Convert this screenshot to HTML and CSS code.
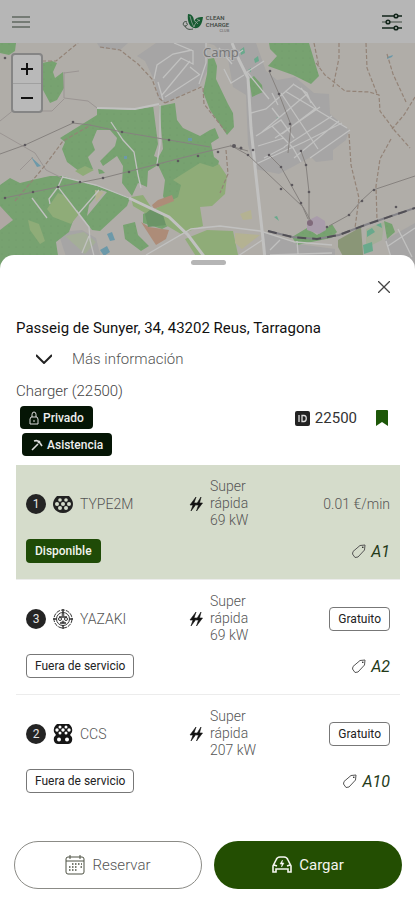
FILE: index.html
```html
<!DOCTYPE html>
<html lang="es">
<head>
<meta charset="utf-8">
<meta name="viewport" content="width=device-width, initial-scale=1">
<title>Clean Charge</title>
<link rel="stylesheet" href="styles.css">
</head>
<body>
<svg class="defs" width="0" height="0" aria-hidden="true">
  <symbol id="bolt" viewBox="0 0 14 14"><path d="M7 0 1 8h3l-2 6 6-8H5zM12 0 7 8h2.500l-2 6 6-8h-3z" stroke="#111" stroke-width=".6"/></symbol>
  <symbol id="tag" viewBox="0 0 16 16"><path d="M2 8.500 9 2.500l5-.5-.5 5L7 14l-3 .5L1.500 11z" fill="none" stroke="currentColor" stroke-linejoin="round"/><circle cx="11.800" cy="4.200" r=".8"/></symbol>
</svg>

<header class="topbar">
  <button class="icon-button" aria-label="Menú">
    <svg width="18" height="12" viewBox="0 0 18 12" stroke="#606860" stroke-width="1.600"><path d="M0 1h18M0 6h18M0 11h18"/></svg>
  </button>
  <div class="brand">
    <svg width="22" height="18" viewBox="0 0 22 18">
      <path d="M6 1c4 0 6 3 6 8 1-4 4-5 9-5-1 8-4 12-9 11C7 14 5 7 6 1z" fill="#175b32"/>
      <path d="M8 3c1 4 2 8 4 11M12 14c1-4 3-6 6-7M13 8l3 3M15 6l3 2" stroke="#a6afa7" stroke-width=".7" fill="none"/>
      <path d="M5 9C1 7 0 13 3 13s3-3 1-3m-1 3c1 3 4 4 8 3" stroke="#3c4b40" stroke-width="1" fill="none"/>
    </svg>
    <div class="brand-name"><span>CLEAN</span><span>CHARGE</span><small>CLUB</small></div>
  </div>
  <button class="icon-button" aria-label="Filtros">
    <svg width="22" height="18" viewBox="0 0 22 18" stroke="#12251a" stroke-width="1.600" fill="#b6b6b6"><path d="M1 3h20M1 15h20"/><path d="M1 9h20" stroke="#6b736d"/><circle cx="15" cy="3" r="1.800"/><circle cx="7" cy="9" r="1.800"/><circle cx="15" cy="15" r="1.800"/></svg>
  </button>
</header>

<main>
<section class="map" aria-label="Mapa">
  <svg class="map-art" viewBox="0 43 415 226" preserveAspectRatio="xMidYMin slice">
    <defs><pattern id="trees" width="7" height="7" patternUnits="userSpaceOnUse"><rect width="7" height="7" fill="#77a270"/><circle cx="2" cy="2" r=".4" fill="#658f60"/></pattern></defs>
    <rect y="43" width="415" height="226" fill="#b0ada8"/>
    <g fill="#a6a5a5">
      <path d="M156 43h50l2 26-9 18-34 16-6-3-4-18-10-21-8-5zM97 43h31l-8 7-20-2z"/>
      <path d="M207 43h49l10 28 11 9 18-3 19 16 15 1 1 20 19 16-3 10-13 10v10l-17 2-5-5-32 17-24-5-7-24-2-50-13-8-5-28-14-14z"/>
      <path d="M262 232l36 12 37 5v20h-70zM385 240l30-17v46h-20zM82 206l12-17 8 3-16 25zM58 232l24-2 14 8 8 31H70z"/>
    </g>
    <g fill="url(#trees)">
      <path d="M0 43h16l-1 8-6 4-9-2zM42 63l10-2 5 2-4 9 2 6 8-6 1 16-7 12-7 3-7-13z"/>
      <path d="M97 108l33 2 30-4 15-3 2 17 6 8 17 8 10-6 5-2 4 10-8 5 3 14 5 4-4 18-7-9-10 6-18 27-14 0-3-7 2-16-7-15-10 6-1 16-9-4-6 13-10-13 1-17-6-10-14 10-3-5 15-15 2-8-7-8h-13l-5 12 3 8-7 7 5 12-10 5-16-12-5-13 3-7-5-4 37-23z"/>
      <path d="M0 185l10-7 10 5 12-3 18-4h13l34 10 33 12-3 8-27 25-8-1-15-20-8 22-13 10 4 27H0zM123 225l12-3 3 13 11 11-8 5-16-12zM98 169l4 1 3 3-6 1z"/>
      <path d="M208 59l6-1 3 8-1 13 12 25 5 9 1 14-7 8-17-25-7-18 4-18zM269 43h40l10 33-8 8-18-9-25-9 9-10-7-7zM254 76l8 9 1 7-11 5-3-18zM384 221l8 3 3 8-8 7zM292 237l15-9 10 7 15-11 5 8-6 6-34 7z"/>
      <path d="M143 214l8-4 21 14-10 5-19-6z"/>
    </g>
    <g fill="#8fac78">
      <path d="M200 163l13 4 6-3 8 12-2 18-13 12-12 1 3 19-22 8-48-28-2-9 12-2 10 15 25-13 3-12-8-5z"/>
      <path d="M58 193l8 3 13 18-8 10-18-7-6-8zM185 239l22-9 26 1 8 38h-37zM28 220l11 4 6 17-5 3-10-14zM75 171l10-5 9 4-11 6z"/>
    </g>
    <path d="M338 240l23-13 3 39-14 3-12-22z" fill="#8a9677"/>
    <path d="M0 206l13 14-13 10z" fill="#afa7a3"/>
    <g fill="#b0ada8"><path d="M153 105h6l4 44-5 9-4-2 4-12zM89 205l12-15 6 2-20 24z"/></g>
    <g fill="#ad8c78"><path d="M152 205l6-5 14-5 2 6-20 8zM141 222l8 5 20 3-3 9-10 6-4-6z"/></g>
    <path d="M145 214l6-5 12 6 3 10-18 2z" fill="#6b9467"/>
    <path d="M235 233l25 2-18 14-7-6zM240 214l11-4 1 9-9 1zM95 190l9 2-8 10z" fill="#b4b292"/>
    <path d="M307 221l10-5 8 5 1 9-7 4-12-4z" fill="#a99cab"/>
    <path d="M366 229l18-7-2 18-16 8zM65 236l19-4 12 10-11 12z" fill="#a4ae98"/>
    <g fill="#69a98c"><path d="M367 231l5-3 3 4-8 5zM363 245l9-3 1 9-9 3zM240 50l4-3 1 6-4 2zM254 59l4-3 1 5-4 2zM376 225l5-2 1 5zM274 217l3-1 2 5zM248 70l3-2v4zM276 118l4-1-2 2z"/></g>
    <g fill="#6c99a9"><path d="M31 157l10 9-4 1zM107 234l5-2 3 8-5 1zM100 250l7-4 3 6-6 4zM188 138h4v3h-4zM124 156h3v3h-3zM387 57l6-2-1 2-5 2z"/></g>
    <g fill="none" stroke="#c1c1c0" stroke-width="1.300">
      <path d="M206 43v20l-7 21M165 97l34-22M154 79l3-14 16-11 19-4M162 95l28-34M174 43l19 8v13l-12-6-18 20M190 67l10 8M163 100l-5-18"/>
      <path d="M251 113l15-4 28-25M272 108l7 9M278 105l-6-12M285 91l62 37M293 84l14 9 4 10M281 93l37 56M301 88l15 20-34 26M307 94l-45 38M320 107l-45 31M332 116l-48 31M339 121l-45 37M350 130l-40 28M254 165l50-23 38-19M256 136l16-10 21 22 8 14M272 126l9-6 13 18M258 146l26-8M264 158l21-11"/>
      <path d="M244 75l-13 8-7-14M247 72l22 27M244 74l20-13M219 48l13 16M230 59l13-9"/>
      <path d="M63 176l-5 11 20 26 11 14 1 13 7 28M89 236l-7 17M58 187l-9 12 1 5M99 190l-20 23M63 177l33 8 33 13M111 122l12 18 11 12 4 23 3 13M32 198l15 20M160 105v39l-3 20M146 255l45-26 29-3 40 5 35 11 37 3M238 256l26-17M270 250l10-10M297 241l2 25M270 255l62-2M386 241l8 26M398 229l14 28M388 246l27-18"/>
      <path d="M129 198l40 19 19 18 18 24M232 43l7 17 9 18 3 50 5 48 7 63 3 30" stroke-width="3"/>
      <path d="M97 108l38 1 24-5" stroke-width="2"/>
    </g>
    <g fill="none" stroke="#9b9593"><path d="M64 72v26l24 3 9 7M42 111h10l12-12M64 73l15-2M0 121l20-16M0 133l35 20 11 17 16 8M20 170l13-13"/></g>
    <g fill="none" stroke="#938377" stroke-width="1.200" stroke-dasharray="4 2">
      <path d="M100 47l20 3 18 14 14 15 7 19 6 5M42 61h14l22-18M165 103l34-15 4-2M203 88l1 16 22 28M316 63l9 12 20 16 24 1 10 3 1 16 15 20 15 17M339 43v15l-6 29M366 43l1 25 9 23 1 4M387 54l6 20 13 28M415 97l-11 18-12 14M15 201l28-33 20-27 28-16M349 134l2 31 8 33-4 30M391 139l-11 20-4 27 1 34M226 150l2 24-8 19M314 43l5 24" />
    </g>
    <g fill="none" stroke="#86827f"><path d="M0 154l25-9 48-22 17 2 32 7 47 8 41 7M4 198l54-11 45-9 55-14 47-12 25-6 18 5M230 145l18 10 55 52 8 14M269 155l12 12 20 36 7 16M301 151l5 14 3 27v28M415 176l-42 14-12 11-12 14-20 11M269 71l10 23 12 31-3 28"/></g>
    <g fill="#5c585d"><circle cx="5" cy="58" r="1.300"/><circle cx="25" cy="145" r="1.300"/><circle cx="73" cy="122" r="1.300"/><circle cx="122" cy="132" r="1.300"/><circle cx="169" cy="140" r="1.300"/><circle cx="198" cy="156" r="1.300"/><circle cx="218" cy="152" r="1.300"/><circle cx="234" cy="146" r="2"/><circle cx="241" cy="148" r="1.500"/><circle cx="248" cy="155" r="1.300"/><circle cx="253" cy="150" r="1.300"/><circle cx="5" cy="198" r="1.300"/><circle cx="33" cy="192" r="1.300"/><circle cx="58" cy="187" r="1.300"/><circle cx="80" cy="182" r="1.300"/><circle cx="103" cy="178" r="1.300"/><circle cx="129" cy="172" r="1.300"/><circle cx="158" cy="165" r="1.300"/><circle cx="178" cy="161" r="1.300"/><circle cx="269" cy="155" r="1.300"/><circle cx="281" cy="167" r="1.300"/><circle cx="292" cy="185" r="1.300"/><circle cx="281" cy="189" r="1.300"/><circle cx="301" cy="203" r="1.300"/><circle cx="309" cy="192" r="1.300"/><circle cx="306" cy="165" r="1.300"/><circle cx="301" cy="151" r="1.300"/><circle cx="290" cy="124" r="1.300"/><circle cx="279" cy="94" r="1.300"/><circle cx="270" cy="71" r="1.300"/><circle cx="374" cy="190" r="1.300"/><circle cx="362" cy="201" r="1.300"/><circle cx="349" cy="215" r="1.300"/><circle cx="327" cy="227" r="1.300"/><circle cx="396" cy="207" r="1.300"/></g>
    <circle cx="310" cy="223" r="3" fill="#806a7b"/>
    <path d="M268 231l24 6 25 2 22-4 26-10 50-17" fill="none" stroke="#858489" stroke-width="2"/>
    <path d="M268 231l24 6 25 2 22-4 26-10 50-17" fill="none" stroke="#514f55" stroke-width="2" stroke-dasharray="9 6"/>
    <text class="map-label" x="203" y="57">Camp</text>
  </svg>
  <div class="zoom-control">
    <button aria-label="Acercar"><svg width="12" height="12" viewBox="0 0 12 12"><path d="M6 0v12M0 6h12"/></svg></button>
    <button aria-label="Alejar"><svg width="12" height="12" viewBox="0 0 12 12"><path d="M0 6h12"/></svg></button>
  </div>
</section>

<section class="sheet">
  <div class="handle"></div>
  <button class="close" aria-label="Cerrar"><svg width="12" height="12" viewBox="0 0 12 12" stroke="#444" stroke-width="1.300"><path d="M0 0l12 12M12 0 0 12"/></svg></button>
  <h1>Passeig de Sunyer, 34, 43202 Reus, Tarragona</h1>
  <button class="more"><svg width="16" height="10" viewBox="0 0 16 10" fill="none" stroke="#222" stroke-width="2"><path d="M0 1l8 8 8-8"/></svg>Más información</button>
  <h2>Charger (22500)</h2>
  <div class="meta">
    <div class="badges">
      <span class="badge dark"><svg width="10" height="14" viewBox="0 0 10 14" fill="none" stroke="#ddd"><path d="M2 6h6l1 2v5H1V8zM3 6V3.500a2 2.500 0 0 1 4 0V6M5 9v2"/></svg>Privado</span>
      <span class="badge dark assist"><svg width="12" height="12" viewBox="0 0 12 12" fill="none" stroke="#ddd" stroke-width="1.600"><path d="M1 11l6-6M3 2c3-1 5 0 6 2l2 3M7 4l2-2"/></svg>Asistencia</span>
    </div>
    <div class="charger-id">
      <svg width="15" height="15" viewBox="0 0 15 15"><rect width="15" height="15" rx="2" fill="#222"/><path d="M4 4v7M7 4.500v6h2c3 0 3-6 0-6z" fill="none" stroke="#ddd" stroke-width="1.300"/></svg>
      <span>22500</span>
      <button class="bookmark" aria-label="Guardar"><svg width="12" height="16" viewBox="0 0 12 16"><path d="M0 1q0-1 1-1h10q1 0 1 1v15l-6-4-6 4z" fill="#1d5708"/></svg></button>
    </div>
  </div>

  <ul class="connectors">
    <li class="connector selected">
      <div class="specs">
        <div class="plug"><span class="number">1</span>
          <svg width="20" height="20" viewBox="0 0 20 20"><path d="M4 2h12q4 4 4 8c0 5-4 9-10 9S0 15 0 10q0-4 4-8z" fill="#222"/><g fill="#d5dccb"><circle cx="7" cy="6" r="1.800"/><circle cx="13" cy="6" r="1.800"/><circle cx="4" cy="10" r="2"/><circle cx="10" cy="10" r="2"/><circle cx="16" cy="10" r="2"/><circle cx="7" cy="14" r="2"/><circle cx="13" cy="14" r="2"/></g></svg>
          <span>TYPE2M</span></div>
        <div class="power"><svg width="14" height="14"><use href="#bolt"/></svg><span>Super<br>rápida<br>69 kW</span></div>
        <div class="price">0.01 €/min</div>
      </div>
      <div class="status"><span class="badge available">Disponible</span><span class="spot"><svg width="16" height="16"><use href="#tag"/></svg>A1</span></div>
    </li>
    <li class="connector">
      <div class="specs">
        <div class="plug"><span class="number">3</span>
          <svg width="20" height="20" viewBox="0 0 20 20" fill="none" stroke="#333"><circle cx="10" cy="10" r="9" stroke-dasharray="4 1"/><circle cx="10" cy="10" r="6.500"/><path d="M6 8h8M7 14h6M10 0v5M10 16v4M0 10h3M17 10h3" stroke-width="1.500"/><circle cx="7" cy="10" r="1.500"/><circle cx="13" cy="10" r="1.500"/><circle cx="10" cy="6" r="1"/><circle cx="10" cy="13" r="1"/></svg>
          <span>YAZAKI</span></div>
        <div class="power"><svg width="14" height="14"><use href="#bolt"/></svg><span>Super<br>rápida<br>69 kW</span></div>
        <div class="price"><span class="badge outline">Gratuito</span></div>
      </div>
      <div class="status"><span class="badge outline">Fuera de servicio</span><span class="spot"><svg width="16" height="16"><use href="#tag"/></svg>A2</span></div>
    </li>
    <li class="connector">
      <div class="specs">
        <div class="plug"><span class="number">2</span>
          <svg width="20" height="20" viewBox="0 0 20 20"><path d="M4 0h12q4 3 3 8l-2 3q3 2 2 6-1 3-4 3H5q-3 0-4-3-1-4 2-6L1 8Q0 3 4 0z" fill="#161616"/><g fill="#fff"><circle cx="7" cy="3" r="1.500"/><circle cx="13" cy="3" r="1.500"/><circle cx="4" cy="6" r="1.700"/><circle cx="10" cy="6" r="1.700"/><circle cx="16" cy="6" r="1.700"/><circle cx="7" cy="9" r="1.500"/><circle cx="13" cy="9" r="1.500"/><circle cx="6" cy="15.500" r="2"/><circle cx="14" cy="15.500" r="2"/></g></svg>
          <span>CCS</span></div>
        <div class="power"><svg width="14" height="14"><use href="#bolt"/></svg><span>Super<br>rápida<br>207 kW</span></div>
        <div class="price"><span class="badge outline">Gratuito</span></div>
      </div>
      <div class="status"><span class="badge outline">Fuera de servicio</span><span class="spot"><svg width="16" height="16"><use href="#tag"/></svg>A10</span></div>
    </li>
  </ul>

  <div class="actions">
    <button class="reserve"><svg width="20" height="20" viewBox="0 0 20 20" fill="none" stroke="#4c5142"><rect x="1" y="2" width="18" height="17" rx="2"/><path d="M1 6h18M5 0v4M15 0v4"/><path d="M4 12h9M4 15h9M7 9h10M17 12h-2" stroke-width="1.600" stroke-dasharray="1.500 1.500"/></svg>Reservar</button>
    <button class="charge"><svg width="20" height="18" viewBox="0 0 20 18" fill="none" stroke="#f4f5ef" stroke-width="1.600"><path d="M1 16V10l3-6q1-3 4-3h4q3 0 4 3l3 6v6h-3v-3H4v3zM2 9l3 1M18 9l-3 1"/><path d="M10.500 4 8 8h2l-.5 3L12 7h-2z" fill="#fff" stroke-width=".5"/></svg>Cargar</button>
  </div>
</section>
</main>
</body>
</html>
```
FILE: styles.css
```css
* { box-sizing: border-box; }
body { margin: 0; background: #fff; color: #222; font-family: Roboto, "Liberation Sans", sans-serif; font-size: 14px; font-weight: 300; }
button { border: 0; padding: 0; background: none; font: inherit; color: inherit; }
svg { display: block; flex-shrink: 0; }
.defs { position: absolute; }
h1, h2, ul { margin: 0; padding: 0; }

.topbar { display: grid; grid-template-columns: 1fr auto 1fr; align-items: center; height: 43px; padding: 0 12px; background: #b6b6b6; }
.icon-button:last-child { justify-self: end; }
.brand { display: flex; align-items: center; gap: 2px; margin-right: 4px; }
.brand-name { display: flex; flex-direction: column; padding-top: 4px; font-size: 6px; line-height: 7px; font-weight: 500; color: #39443c; }
.brand-name small { align-self: flex-end; font-size: 4px; line-height: 5px; color: #777; }

.map { position: relative; height: 226px; overflow: hidden; background: #b0ada8; }
.map-art { width: 100%; height: 100%; }
.map-label { font: 400 13px "Noto Sans", sans-serif; fill: #777; stroke: #b4b4b4; stroke-width: 2px; paint-order: stroke; }
.zoom-control { position: absolute; left: 11px; top: 10px; width: 32px; border: 2px solid #858585; border-radius: 4px; background: #b9b9b9; }
.zoom-control button { display: grid; place-items: center; width: 100%; height: 28px; }
.zoom-control button + button { border-top: 1px solid #a0a0a0; }
.zoom-control path { stroke: #111; stroke-width: 2; }

.sheet { position: relative; display: flex; flex-direction: column; margin-top: -14px; padding: 5px 15px 12px 16px; border-radius: 14px 14px 0 0; background: #fff; }
.handle { align-self: center; width: 35px; height: 5px; border-radius: 3px; background: #b5b5b5; }
.close { align-self: flex-end; margin: 16px 10px 0 0; }
h1 { margin-top: 24px; font-size: 15px; line-height: 22px; font-weight: 400; color: #111; }
.more { display: flex; align-items: center; gap: 20px; height: 22px; margin: 9px 0 0 20px; font-size: 15px; color: #555; }
h2 { margin-top: 10px; font-size: 15px; line-height: 22px; font-weight: 300; color: #444; }
.meta { display: flex; justify-content: space-between; margin-top: 4px; }
.badges { display: flex; flex-direction: column; align-items: flex-start; gap: 4px; padding-left: 4px; }
.badge { display: inline-flex; align-items: center; gap: 4px; height: 24px; padding: 0 8px; border: 1px solid transparent; border-radius: 4px; font-size: 12px; font-weight: 400; white-space: nowrap; }
.dark { height: 23px; background: #051505; color: #eee; font-weight: 500; }
.assist { margin-left: 2px; }
.available { background: #1f4b07; color: #f2f5ee; font-weight: 500; }
.outline { border-color: #777; color: #222; }
.charger-id { display: flex; align-items: center; gap: 5px; height: 24px; padding-right: 12px; font-size: 15px; font-weight: 400; color: #333; }
.bookmark { margin-left: 14px; }

.connectors { list-style: none; margin-top: 9px; }
.connector { padding: 13px 10px 16px; }
.connector + .connector { border-top: 1px solid #ececec; }
.selected { background: #d5dccb; }
.specs { display: grid; grid-template-columns: 163px 1fr auto; align-items: center; color: #555; }
.plug, .power, .spot { display: flex; align-items: center; }
.plug, .power { gap: 7px; }
.power { line-height: 17px; }
.power svg, .spot svg { fill: #111; }
.number { display: grid; place-items: center; width: 20px; height: 20px; border-radius: 50%; background: #242424; color: #e4e4e4; font-size: 12px; font-weight: 400; }
.status { display: flex; align-items: center; justify-content: space-between; margin-top: 10px; }
.spot { gap: 4px; color: #243a18; font-size: 16px; font-style: italic; font-weight: 400; }
.spot svg { color: #555; }

.actions { display: grid; grid-template-columns: 1fr 1fr; gap: 12px; margin: 32px -2px 0; }
.actions button { display: flex; align-items: center; justify-content: center; gap: 7px; height: 48px; border-radius: 24px; font-size: 15px; }
.reserve { border: 1px solid #8b8b86; color: #555; }
.actions .charge { background: #234e02; color: #f4f5ef; font-weight: 400; }
```
